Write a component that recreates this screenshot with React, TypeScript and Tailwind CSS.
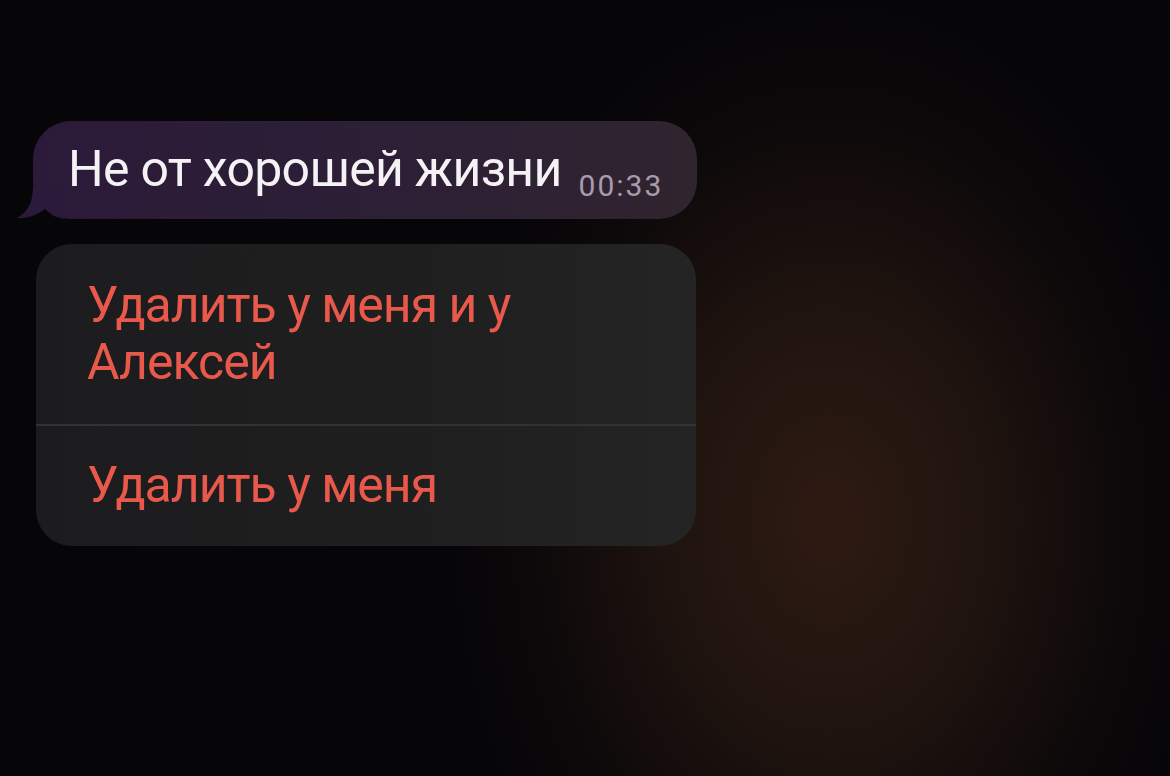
import React from "react";

const App: React.FC = () => {
  return (
    <div
      className="relative w-[1170px] h-[776px] overflow-hidden bg-[#07060a] bg-[radial-gradient(ellipse_380px_520px_at_830px_520px,#2e1a13_0%,#20140f_40%,#0d090a_78%,#060508_100%)] font-['Roboto',sans-serif]"
    >
      <div className="flex flex-col items-start pt-[121px] pl-[33px]">
        {/* Message bubble */}
        <div className="relative w-[664px] h-[98px] rounded-[38px] bg-[linear-gradient(90deg,#2b1a39_0%,#2d1f36_50%,#30242f_100%)] flex items-start pl-[35px] pt-[18px]">
          <svg
            className="absolute left-[-16px] bottom-0"
            width="48"
            height="34"
            viewBox="0 0 48 34"
          >
            <path d="M16 0 C16 16 12 26 0 33 C10 34 20 30 28 24 C34 30 40 33 48 34 L48 0 Z" fill="#2b1a39" />
          </svg>
          <span className="relative text-[50px] leading-[60px] tracking-[-0.7px] text-[#f4f2f5]">
            Не от хорошей жизни
          </span>
          <span className="relative ml-[17px] mt-[30px] text-[30px] leading-[34px] tracking-[2px] text-[#a99bab]">
            00:33
          </span>
        </div>

        {/* Context menu */}
        <div className="mt-[25px] ml-[3px] w-[660px] rounded-[36px] overflow-hidden bg-[linear-gradient(90deg,#1c1b1d_0%,#1f1f20_60%,#242424_100%)]">
          <div className="pl-[51px] pr-[40px] pt-[33px] pb-[33px] text-[50px] leading-[57px] tracking-[-1px] text-[#e8594b]">
            Удалить у меня и у
            <br />
            Алексей
          </div>
          <div className="h-[2px] bg-[#323133]" />
          <div className="pl-[51px] pt-[31px] pb-[32px] text-[50px] leading-[57px] tracking-[-1px] text-[#e8594b]">
            Удалить у меня
          </div>
        </div>
      </div>
    </div>
  );
};

export default App;
